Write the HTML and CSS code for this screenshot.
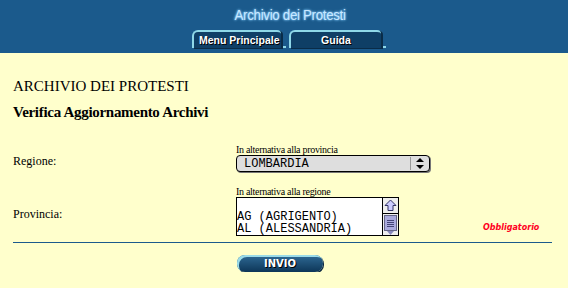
FILE: index.html
```html
<!DOCTYPE html>
<html lang="it">
<head>
    <meta charset="UTF-8">
    <title>Archivio dei Protesti</title>
    <link rel="stylesheet" href="styles.css">
</head>
<body>
    <div class="header">
        <div class="header-title">Archivio dei Protesti</div>
        <div class="tabs">
            <a class="tab tab-menu" href="#">Menu Principale</a>
            <a class="tab tab-guida" href="#">Guida</a>
        </div>
    </div>

    <div class="content">
        <h1>ARCHIVIO DEI PROTESTI</h1>
        <h2>Verifica Aggiornamento Archivi</h2>

        <form class="search-form">
            <div class="form-row row-regione">
                <label class="field-label">Regione:</label>
                <div class="field">
                    <span class="hint">In alternativa alla provincia</span>
                    <div class="select-box">
                        <span>LOMBARDIA</span>
                        <span class="select-arrows">
                            <svg width="8" height="11" viewBox="0 0 8 11"><path d="M4 0 L8 4 H0 Z M0 7 H8 L4 11 Z" fill="#000"/></svg>
                        </span>
                    </div>
                </div>
            </div>

            <div class="form-row row-provincia">
                <label class="field-label">Provincia:</label>
                <div class="field">
                    <span class="hint">In alternativa alla regione</span>
                    <div class="list-box">
                        <div class="list-items">
                            <div>&nbsp;</div>
                            <div>AG (AGRIGENTO)</div>
                            <div>AL (ALESSANDRIA)</div>
                        </div>
                        <div class="scrollbar">
                            <div class="scroll-up">
                                <svg width="13" height="13" viewBox="0 0 13 13"><path d="M6.5 1 L12 6.5 H9 V11.5 H4 V6.5 H1 Z" fill="#ccccff" stroke="#333366" stroke-width="1"/></svg>
                            </div>
                            <div class="scroll-thumb">
                                <span></span><span></span><span></span><span></span>
                            </div>
                            <div class="scroll-down">
                                <svg width="7" height="4" viewBox="0 0 7 4"><path d="M0 0 H7 L3.5 4 Z" fill="#8888bb"/></svg>
                            </div>
                        </div>
                    </div>
                </div>
                <span class="required">Obbligatorio</span>
            </div>

            <div class="divider"></div>

            <div class="actions">
                <button type="button" class="btn-invio">INVIO</button>
            </div>
        </form>
    </div>
</body>
</html>
```

FILE: styles.css
```css
body {
    margin: 0;
    background-color: #ffffcc;
    font-family: "Liberation Serif", "Times New Roman", serif;
    color: #000;
}
.header {
    background-color: #1b5a8c;
    height: 53px;
    display: flex;
    flex-direction: column;
    align-items: center;
}
.header-title {
    margin-top: 6px;
    margin-left: 12px;
    font-family: "Liberation Sans Narrow", "Liberation Sans", Arial, sans-serif;
    font-size: 15px;
    letter-spacing: -0.3px;
    color: #c8e8ff;
    text-shadow: 0 0 3px #8fd0ff, 0 0 2px #6fc0ff;
    transform: scaleX(0.88);
}
.tabs {
    display: flex;
    gap: 8px;
    margin-top: 7px;
    margin-left: 5px;
}
.tab {
    position: relative;
    display: block;
    height: 16px;
    line-height: 16px;
    white-space: nowrap;
    background-color: #0f3f66;
    border-top: 2px solid #8fd8e8;
    border-left: 2px solid #8fd8e8;
    border-radius: 6px 4px 0 0;
    box-shadow: 2px 1px 0 #0a2c48;
    color: #fff;
    font-family: "Liberation Sans", Arial, sans-serif;
    font-weight: bold;
    font-size: 10.5px;
    text-decoration: none;
    text-shadow: 1px 1px 0 #000;
}
.tab::after {
    content: "";
    position: absolute;
    right: -5px;
    bottom: 0;
    width: 3px;
    height: 2px;
    background-color: #8fd8e8;
}
.tab-menu {
    width: 82px;
    padding-left: 5px;
}
.tab-guida {
    width: 90px;
    text-align: center;
}
.content {
    padding: 0 16px 0 13px;
}
h1 {
    margin: 24px 0 0;
    font-size: 15px;
    font-weight: normal;
    line-height: 18px;
}
h2 {
    margin: 8px 0 0;
    font-size: 15px;
    font-weight: bold;
    line-height: 18px;
    letter-spacing: -0.3px;
}
.form-row {
    display: grid;
    grid-template-columns: 223px 200px 1fr;
    align-items: end;
}
.row-regione {
    margin-top: 24px;
}
.row-provincia {
    margin-top: 15px;
}
.field-label {
    font-size: 12px;
    line-height: 14px;
    padding-bottom: 4px;
}
.row-provincia .field-label {
    padding-bottom: 15px;
}
.field {
    display: flex;
    flex-direction: column;
}
.hint {
    font-size: 10px;
    line-height: 10px;
    letter-spacing: -0.3px;
}
.select-box {
    width: 194px;
    height: 17px;
    box-sizing: border-box;
    border: 1px solid #000;
    border-radius: 4px;
    background-color: #dedede;
    box-shadow: 1px 1px 0 #777;
    display: flex;
    justify-content: space-between;
    align-items: center;
    padding-left: 7px;
    font-family: "Liberation Mono", "Courier New", monospace;
    font-size: 12px;
}
.select-arrows {
    width: 18px;
    height: 13px;
    border-left: 1px solid #999;
    display: flex;
    align-items: center;
    justify-content: center;
}
.list-box {
    width: 163px;
    height: 39px;
    box-sizing: border-box;
    border: 1px solid #000;
    background-color: #fff;
    display: flex;
    overflow: hidden;
}
.list-items {
    flex: 1;
    font-family: "Liberation Mono", "Courier New", monospace;
    font-size: 12px;
    line-height: 12.5px;
}
.scrollbar {
    width: 15px;
    border-left: 1px solid #000;
    background-color: #eeeeee;
    display: flex;
    flex-direction: column;
}
.scroll-up {
    height: 15px;
    border-bottom: 1px solid #000;
    display: flex;
    align-items: center;
    justify-content: center;
}
.scroll-thumb {
    flex: 1;
    margin: 1px 1px 0;
    background-color: #aaaadd;
    border: 1px solid #666688;
    display: flex;
    flex-direction: column;
    justify-content: center;
    gap: 1px;
    padding: 0 2px;
}
.scroll-thumb span {
    height: 1px;
    background-color: #444477;
}
.scroll-down {
    height: 4px;
    display: flex;
    justify-content: center;
}
.required {
    justify-self: start;
    margin-left: 47px;
    padding-bottom: 4px;
    color: #ff0022;
    font-family: "DejaVu Sans", Verdana, sans-serif;
    font-style: italic;
    font-weight: bold;
    font-size: 8px;
}
.divider {
    margin-top: 6px;
    height: 1px;
    background-color: #1b5a8c;
    width: 539px;
}
.actions {
    padding: 10px 0 0 224px;
}
.btn-invio {
    width: 86px;
    height: 17px;
    border: none;
    border-radius: 8px;
    background: linear-gradient(#2f6a95, #0d3658);
    box-shadow: inset 2px 2px 0 #9adbe8, 1px 1px 0 #0a2740;
    color: #fff;
    font-family: "DejaVu Sans", Verdana, sans-serif;
    font-weight: bold;
    font-size: 10px;
    text-shadow: 1px 1px 0 #000;
    padding: 0;
}
```
